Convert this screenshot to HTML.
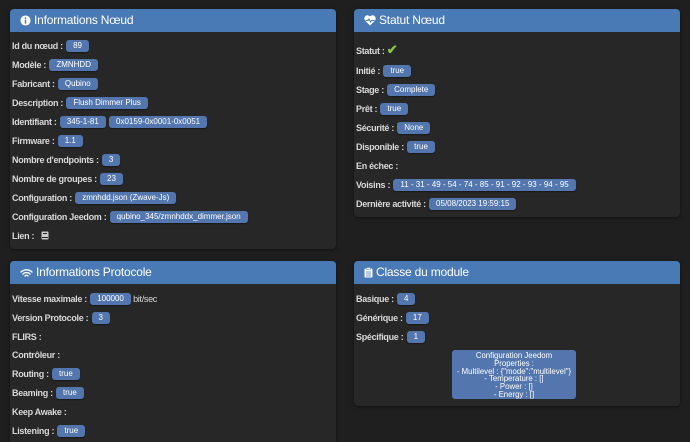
<!DOCTYPE html><html><head><meta charset="utf-8"><style>
*{margin:0;padding:0;box-sizing:border-box}
html,body{width:690px;height:442px;overflow:hidden}
body{background:#1f1f1f;font-family:"Liberation Sans",sans-serif;position:relative;color:#ddd}
.p{position:absolute;background:#272727;border-radius:4px;overflow:hidden;box-shadow:0 1px 3px rgba(0,0,0,.5)}
.h{height:23px;background:#4a7ab6;color:#fff;font-size:12px;line-height:23px;padding-left:10px;letter-spacing:-0.2px}
.h svg{vertical-align:-2px;margin-right:3px}
.r{position:absolute;left:2px;font-size:9px;font-weight:bold;line-height:12px;white-space:nowrap;color:#d8d8d8;letter-spacing:-0.3px}
.b{display:inline-block;background:#5276ad;color:#fff;font-weight:normal;font-size:8px;line-height:12px;height:12px;padding:0 7px;border-radius:3px;margin-left:1px;vertical-align:top;box-shadow:0 1px 1px rgba(0,0,0,.4);letter-spacing:0}
.n{font-weight:normal}
</style></head><body>
<div class="p" style="left:10px;top:9px;width:326px;height:240px">
<div class="h"><svg width="11" height="11" viewBox="0 0 12 12"><circle cx="6" cy="6" r="5.5" fill="#fff"/><rect x="5.2" y="5" width="1.6" height="4.5" fill="#4a7ab6"/><circle cx="6" cy="3.3" r="1" fill="#4a7ab6"/></svg>Informations Nœud</div>
<div class="r" style="top:31px">Id du nœud : <span class="b">89</span></div>
<div class="r" style="top:50px">Modèle : <span class="b">ZMNHDD</span></div>
<div class="r" style="top:69px">Fabricant : <span class="b">Qubino</span></div>
<div class="r" style="top:88px">Description : <span class="b">Flush Dimmer Plus</span></div>
<div class="r" style="top:107px">Identifiant : <span class="b">345-1-81</span> <span class="b">0x0159-0x0001-0x0051</span></div>
<div class="r" style="top:126px">Firmware : <span class="b">1.1</span></div>
<div class="r" style="top:145px">Nombre d'endpoints : <span class="b">3</span></div>
<div class="r" style="top:164px">Nombre de groupes : <span class="b">23</span></div>
<div class="r" style="top:183px">Configuration : <span class="b">zmnhdd.json (Zwave-Js)</span></div>
<div class="r" style="top:202px">Configuration Jeedom : <span class="b">qubino_345/zmnhddx_dimmer.json</span></div>
<div class="r" style="top:221px">Lien : &nbsp;&nbsp;<svg width="8" height="9" viewBox="0 0 8 9" style="vertical-align:-1px"><rect x="0.5" y="0.5" width="7" height="8" rx="1" fill="#ccc"/><rect x="2" y="2" width="4" height="1" fill="#272727"/><rect x="1" y="6" width="6" height="1" fill="#272727"/></svg></div>
</div>
<div class="p" style="left:354px;top:9px;width:326px;height:208px">
<div class="h"><svg width="12" height="11" viewBox="0 0 12 11"><path d="M6 10.5L1 5.5A3 3 0 0 1 6 1.5A3 3 0 0 1 11 5.5Z" fill="#fff"/><path d="M1.5 5.5H4L5 4L6.5 7L7.5 5.5H10.5" stroke="#4a7ab6" fill="none" stroke-width="1"/></svg>Statut Nœud</div>
<div class="r" style="top:35px">Statut : <span style="color:#8bc34a;font-size:13px">✔</span></div>
<div class="r" style="top:56px">Initié : <span class="b">true</span></div>
<div class="r" style="top:75px">Stage : <span class="b">Complete</span></div>
<div class="r" style="top:94px">Prêt : <span class="b">true</span></div>
<div class="r" style="top:113px">Sécurité : <span class="b">None</span></div>
<div class="r" style="top:132px">Disponible : <span class="b">true</span></div>
<div class="r" style="top:151px">En échec :</div>
<div class="r" style="top:170px">Voisins : <span class="b">11 - 31 - 49 - 54 - 74 - 85 - 91 - 92 - 93 - 94 - 95</span></div>
<div class="r" style="top:189px">Dernière activité : <span class="b">05/08/2023 19:59:15</span></div>
</div>
<div class="p" style="left:10px;top:261px;width:326px;height:200px">
<div class="h"><svg width="13" height="10" viewBox="0 0 13 10"><path d="M1 4A8 8 0 0 1 12 4M3 6A5 5 0 0 1 10 6M5 8A2 2 0 0 1 8 8" stroke="#fff" stroke-width="1.4" fill="none" stroke-linecap="round"/></svg>Informations Protocole</div>
<div class="r" style="top:32px">Vitesse maximale : <span class="b">100000</span> <span class="n">bit/sec</span></div>
<div class="r" style="top:51px">Version Protocole : <span class="b">3</span></div>
<div class="r" style="top:70px">FLIRS :</div>
<div class="r" style="top:88px">Contrôleur :</div>
<div class="r" style="top:107px">Routing : <span class="b">true</span></div>
<div class="r" style="top:126px">Beaming : <span class="b">true</span></div>
<div class="r" style="top:145px">Keep Awake :</div>
<div class="r" style="top:164px">Listening : <span class="b">true</span></div>
</div>
<div class="p" style="left:354px;top:261px;width:326px;height:145px">
<div class="h"><svg width="9" height="11" viewBox="0 0 9 11"><rect x="0.5" y="1.5" width="8" height="9" rx="1" fill="#fff"/><rect x="2.5" y="0.5" width="4" height="2" fill="#fff" stroke="#4a7ab6" stroke-width=".5"/><path d="M2 5H7M2 7H7M2 9H7" stroke="#4a7ab6" stroke-width=".8"/></svg>Classe du module</div>
<div class="r" style="top:32px">Basique : <span class="b">4</span></div>
<div class="r" style="top:51px">Générique : <span class="b">17</span></div>
<div class="r" style="top:70px">Spécifique : <span class="b">1</span></div>
<div style="position:absolute;left:98px;top:89px;width:124px;height:49px;background:#5276ad;border-radius:3px;color:#fff;font-size:7.8px;line-height:7.8px;text-align:center;padding-top:2px">Configuration Jeedom<br>Properties :<br>- Multilevel : {"mode":"multilevel"}<br>- Temperature : []<br>- Power : []<br>- Energy : []</div>
</div>
</body></html>
